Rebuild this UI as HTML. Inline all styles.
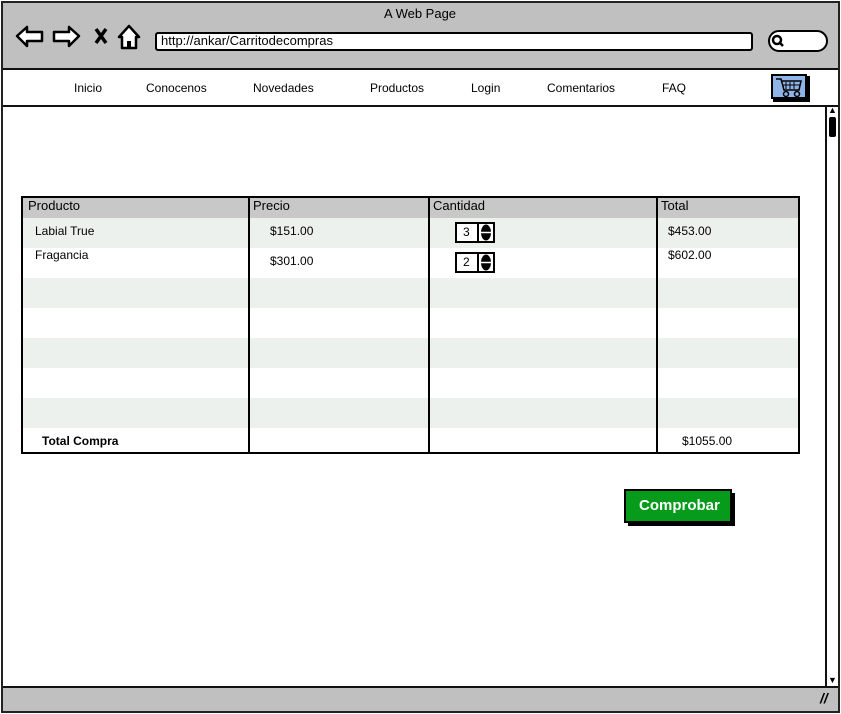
<!DOCTYPE html>
<html><head><meta charset="utf-8"><style>
*{margin:0;padding:0;box-sizing:border-box}
body{width:841px;height:714px;background:#fff;position:relative;overflow:hidden;font-family:"Liberation Sans",sans-serif;font-size:12px;color:#000}
.a{position:absolute}
.t{position:absolute;white-space:nowrap}
</style></head><body>
<div class="a" style="left:1px;top:1px;width:839px;height:712px;border:2px solid #222;background:#fff"></div>
<div class="a" style="left:3px;top:3px;width:835px;height:67px;background:#c0c0c0;border-bottom:2px solid #111"></div>
<div class="t" style="left:384px;top:6px;font-size:13px">A Web Page</div>
<svg class="a" style="left:14px;top:22px" width="132" height="30" viewBox="0 0 132 30">
<path d="M3 14 L13 5 L13 10 L28 10 L28 19 L13 19 L13 24 Z" fill="#fff" stroke="#000" stroke-width="2.5" stroke-linejoin="round"/>
<path d="M65 14 L55 5 L55 10 L40 10 L40 19 L55 19 L55 24 Z" fill="#fff" stroke="#000" stroke-width="2.5" stroke-linejoin="round"/>
<path d="M82 7 L92 21 M92 7 L82 21" stroke="#000" stroke-width="3.5"/>
<path d="M105 15 L115 4 L125 15 L122 15 L122 26 L108 26 L108 15 Z" fill="#fff" stroke="#000" stroke-width="2.5" stroke-linejoin="round"/>
<rect x="113" y="19" width="4" height="7" fill="#000"/>
</svg>
<div class="a" style="left:155px;top:32px;width:598px;height:19px;background:#fff;border:2px solid #000;border-radius:3px"></div>
<div class="t" style="left:161px;top:33px;font-size:13px">http://ankar/Carritodecompras</div>
<div class="a" style="left:768px;top:30px;width:60px;height:22px;background:#fff;border:2px solid #000;border-radius:11px"></div>
<svg class="a" style="left:771px;top:34px" width="14" height="14"><circle cx="6" cy="6" r="4" fill="none" stroke="#000" stroke-width="2.5"/><path d="M8 8 L12 12" stroke="#000" stroke-width="2.5"/></svg>
<div class="a" style="left:3px;top:105px;width:835px;height:2px;background:#111"></div>
<div class="t" style="left:74px;top:81px">Inicio</div>
<div class="t" style="left:146px;top:81px">Conocenos</div>
<div class="t" style="left:253px;top:81px">Novedades</div>
<div class="t" style="left:370px;top:81px">Productos</div>
<div class="t" style="left:471px;top:81px">Login</div>
<div class="t" style="left:547px;top:81px">Comentarios</div>
<div class="t" style="left:662px;top:81px">FAQ</div>
<div class="a" style="left:773px;top:76px;width:37px;height:26px;background:#000"></div>
<div class="a" style="left:771px;top:74px;width:36px;height:25px;background:#8fb4e8;border:2px solid #000"></div>
<svg class="a" style="left:775px;top:76px" width="28" height="22"><path d="M1 3 L6 3 L9 14 L24 14 L26 5 L7 5" fill="none" stroke="#000" stroke-width="1.5"/><path d="M11 6 V13 M15 6 V13 M19 6 V13 M8 9 H25" stroke="#000"/><circle cx="11" cy="18" r="2.5" fill="none" stroke="#000" stroke-width="1.5"/><circle cx="22" cy="18" r="2.5" fill="none" stroke="#000" stroke-width="1.5"/></svg>
<div class="a" style="left:825px;top:106px;width:2px;height:580px;background:#111"></div>
<div class="a" style="left:829px;top:117px;width:7px;height:20px;background:#000;border-radius:2px"></div>
<div class="t" style="left:828px;top:105px;font-size:9px">▲</div>
<div class="t" style="left:828px;top:675px;font-size:9px">▼</div>
<div class="a" style="left:3px;top:686px;width:835px;height:25px;background:#c0c0c0;border-top:2px solid #111"></div>
<div class="t" style="left:820px;top:690px;font-size:14px;font-weight:bold;font-style:italic">//</div>
<div class="a" style="left:21px;top:196px;width:779px;height:258px;border:2px solid #000;background:#fff;overflow:hidden">
<div class="a" style="left:0;top:0;width:777px;height:20px;background:#c8c8c8"></div>
<div class="a" style="left:0;top:20px;width:777px;height:30px;background:#ecf1ee"></div>
<div class="a" style="left:0;top:80px;width:777px;height:30px;background:#ecf1ee"></div>
<div class="a" style="left:0;top:140px;width:777px;height:30px;background:#ecf1ee"></div>
<div class="a" style="left:0;top:200px;width:777px;height:30px;background:#ecf1ee"></div>
<div class="a" style="left:225px;top:0;width:2px;height:258px;background:#000"></div>
<div class="a" style="left:405px;top:0;width:2px;height:258px;background:#000"></div>
<div class="a" style="left:633px;top:0;width:2px;height:258px;background:#000"></div>
</div>
<div class="t" style="left:28px;top:198px;font-size:13px">Producto</div>
<div class="t" style="left:253px;top:198px;font-size:13px">Precio</div>
<div class="t" style="left:433px;top:198px;font-size:13px">Cantidad</div>
<div class="t" style="left:661px;top:198px;font-size:13px">Total</div>
<div class="t" style="left:35px;top:224px">Labial True</div>
<div class="t" style="left:35px;top:248px">Fragancia</div>
<div class="t" style="left:270px;top:224px">$151.00</div>
<div class="t" style="left:270px;top:254px">$301.00</div>
<div class="t" style="left:668px;top:224px">$453.00</div>
<div class="t" style="left:668px;top:248px">$602.00</div>
<div class="t" style="left:42px;top:434px;font-weight:bold">Total Compra</div>
<div class="t" style="left:682px;top:434px">$1055.00</div>
<div class="a" style="left:455px;top:222px;width:40px;height:21px;border:2px solid #000;background:#fff"></div>
<div class="a" style="left:477px;top:222px;width:2px;height:21px;background:#000"></div>
<div class="t" style="left:463px;top:225px">3</div>
<svg class="a" style="left:480px;top:224px" width="12" height="17"><ellipse cx="6" cy="8.5" rx="5" ry="8" fill="#000"/><path d="M1 8.5 H11" stroke="#fff" stroke-width="1.5"/></svg>
<div class="a" style="left:455px;top:252px;width:40px;height:21px;border:2px solid #000;background:#fff"></div>
<div class="a" style="left:477px;top:252px;width:2px;height:21px;background:#000"></div>
<div class="t" style="left:463px;top:255px">2</div>
<svg class="a" style="left:480px;top:254px" width="12" height="17"><ellipse cx="6" cy="8.5" rx="5" ry="8" fill="#000"/><path d="M1 8.5 H11" stroke="#fff" stroke-width="1.5"/></svg>
<div class="a" style="left:628px;top:493px;width:107px;height:33px;background:#000"></div>
<div class="a" style="left:624px;top:489px;width:108px;height:34px;background:#069b1a;border:2px solid #000"></div>
<div class="t" style="left:639px;top:497px;color:#fff;font-weight:bold;font-size:15px">Comprobar</div>
</body></html>
